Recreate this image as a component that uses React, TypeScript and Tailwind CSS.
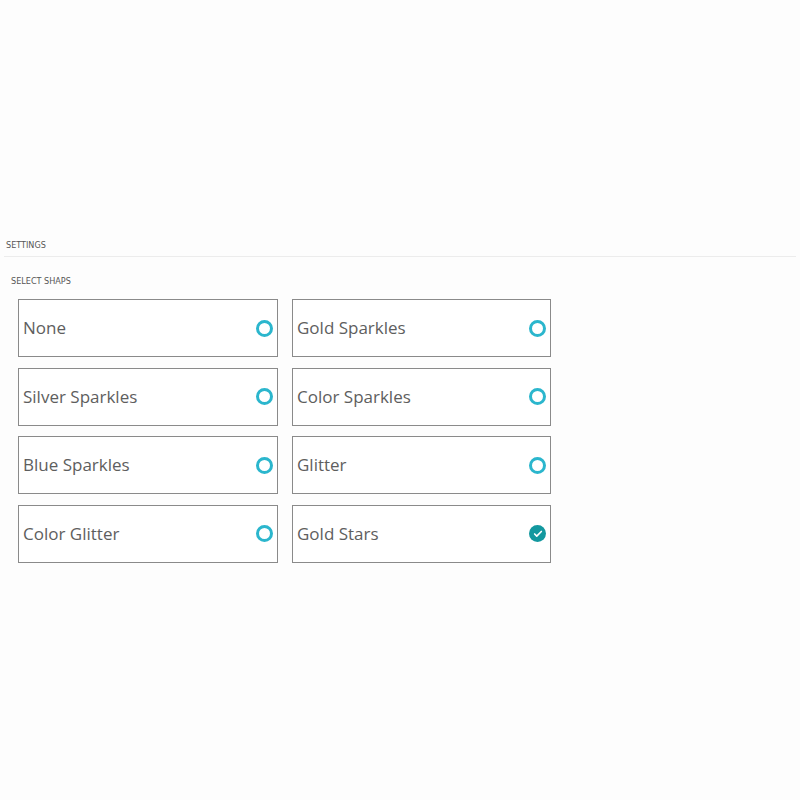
import { Check } from "lucide-react";

const shapes = [
  "None",
  "Gold Sparkles",
  "Silver Sparkles",
  "Color Sparkles",
  "Blue Sparkles",
  "Glitter",
  "Color Glitter",
  "Gold Stars",
];

const selected = "Gold Stars";

export default function App() {
  return (
    <div className="min-h-[800px] bg-[#fdfdfd] pt-[230px]" style={{ fontFamily: '"Open Sans", sans-serif' }}>
      {/* header */}
      <div className="mx-[4px] w-[792px] border-b border-[#ececec] pb-[2px] pl-[2px]">
        <span
          className="text-[9px] uppercase leading-[12px] text-[#555]"
          style={{ fontFamily: '"DejaVu Sans Condensed", "Liberation Sans", sans-serif' }}
        >
          Settings
        </span>
      </div>

      <div className="pl-[11px] pt-[9px]">
        <span
          className="text-[9px] uppercase leading-[12px] text-[#555]"
          style={{ fontFamily: '"DejaVu Sans Condensed", "Liberation Sans", sans-serif' }}
        >
          Select Shaps
        </span>
      </div>

      {/* options */}
      <div className="ml-[18px] mt-[9px] grid w-[533px] grid-cols-[260px_259px] gap-x-[14px] gap-y-[10.5px]">
        {shapes.map((name) => (
          <div
            key={name}
            className="flex h-[58px] items-center justify-between border border-[#8a8a8a] bg-white pl-[4px] pr-[4px]"
          >
            <span className="text-[17px] text-[#5e5e5e]">{name}</span>
            {name === selected ? (
              <span className="flex h-[17px] w-[17px] items-center justify-center rounded-full bg-[#13989f]">
                <Check className="h-[10px] w-[10px] text-white" strokeWidth={4} />
              </span>
            ) : (
              <span className="h-[17px] w-[17px] rounded-full border-[3px] border-[#2bb6cd]" />
            )}
          </div>
        ))}
      </div>
    </div>
  );
}
